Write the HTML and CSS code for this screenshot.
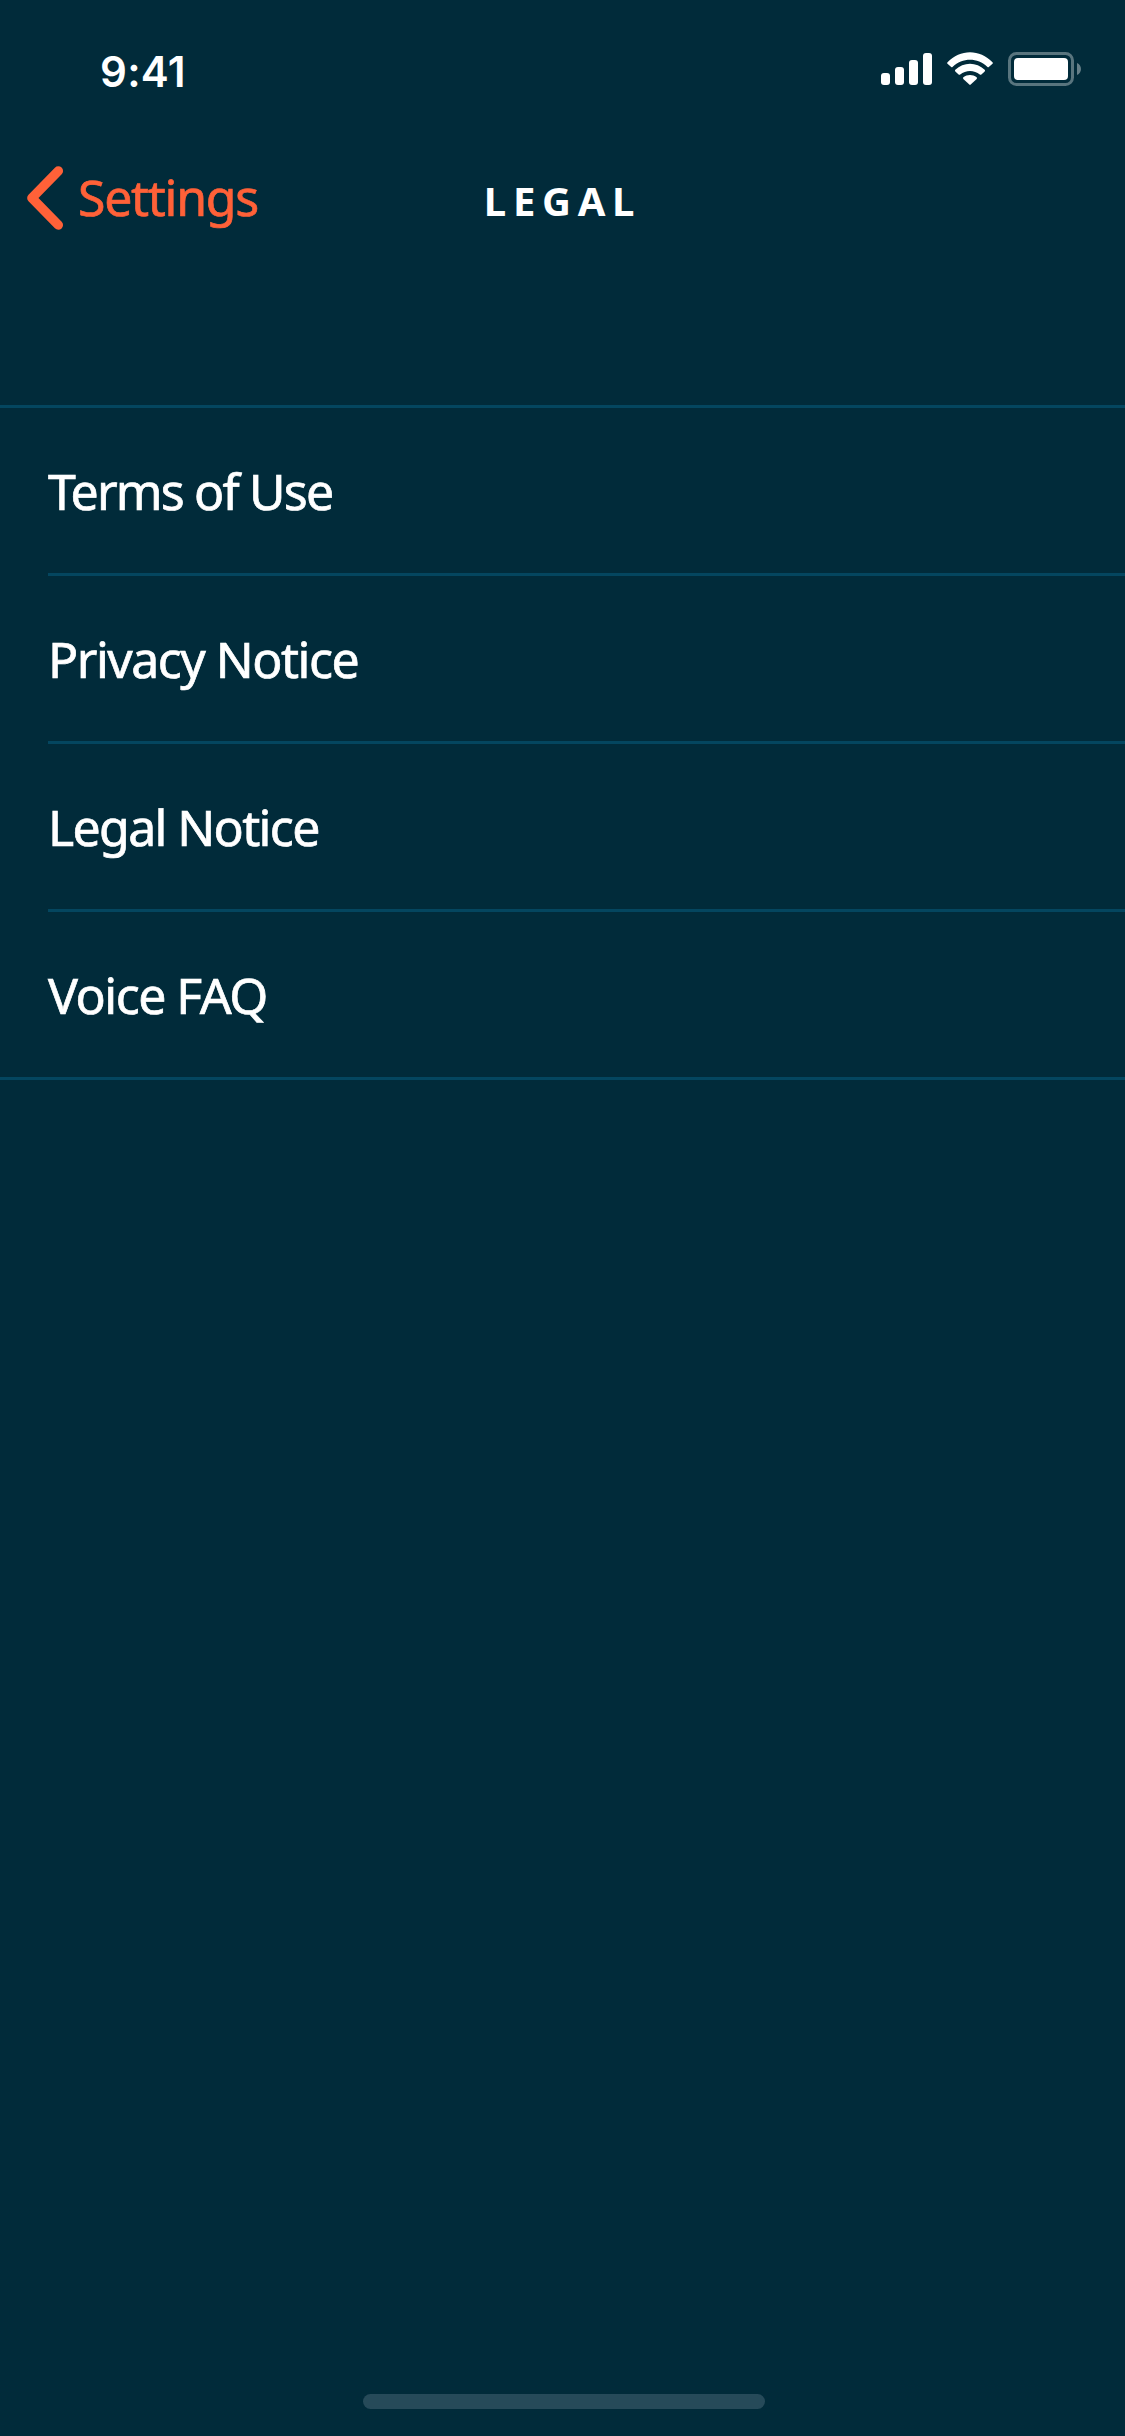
FILE: index.html
```html
<!DOCTYPE html>
<html lang="en">
<head>
<meta charset="utf-8">
<title>Legal</title>
<link rel="stylesheet" href="styles.css">
</head>
<body>
<div class="screen">
  <div class="status-bar">
    <span class="time">9:41</span>
    <svg class="status-icons" width="202" height="36" viewBox="880 51 202 36" fill="#fff">
      <rect x="881" y="73" width="9" height="12" rx="3"/>
      <rect x="895" y="67" width="9" height="18" rx="3"/>
      <rect x="909" y="60" width="9" height="25" rx="3"/>
      <rect x="923" y="53" width="9" height="32" rx="3"/>
      <path d="M947.5 62.2C960 48.8 980 48.800 992.500 62.200Q993.200 63 992.500 63.800L988.800 67Q988.200 67.500 987.500 66.900C977.500 57.300 962.500 57.300 952.500 66.900Q951.800 67.500 951.200 67L947.500 63.800Q946.800 63 947.500 62.200Z"/>
      <path d="M955.300 69.800C963.500 61.800 976.500 61.800 984.700 69.800Q985.400 70.600 984.700 71.400L981.400 74.500Q980.600 75.200 979.800 74.500C974.300 69.800 965.700 69.800 960.200 74.500Q959.400 75.200 958.600 74.500L955.300 71.400Q954.600 70.600 955.300 69.800Z"/>
      <path d="M963.400 77.300C967.200 74.100 972.800 74.100 976.600 77.300Q977.400 78.100 976.700 78.900L970.700 84.600Q970 85.200 969.300 84.600L963.300 78.900Q962.600 78.100 963.400 77.300Z"/>
      <rect x="1009.500" y="53.500" width="63" height="31" rx="7" fill="none" stroke="#fff" stroke-opacity=".35" stroke-width="3"/>
      <rect x="1014" y="58" width="54" height="22" rx="4"/>
      <path d="M1077 63C1082.300 65.300 1082.300 72.700 1077 75Z" fill-opacity=".4"/>
    </svg>
  </div>
  <div class="nav-bar">
    <a class="back">
      <svg class="chevron" width="37" height="64" viewBox="27 166 37 64" fill="none" stroke="#ff6138" stroke-width="9.500" stroke-linecap="round" stroke-linejoin="round">
        <path d="M58.300 171L31.900 198L58.300 225"/>
      </svg>
      <span class="back-label">Settings</span>
    </a>
    <h1 class="title">LEGAL</h1>
  </div>
  <ul class="list">
    <li class="row"><span class="label terms">Terms of Use</span></li>
    <li class="row"><span class="label">Privacy Notice</span></li>
    <li class="row"><span class="label notice">Legal Notice</span></li>
    <li class="row"><span class="label">Voice FAQ</span></li>
  </ul>
  <div class="home-indicator"></div>
</div>
</body>
</html>
```
FILE: styles.css
```css
* { box-sizing: border-box; }
body {
  margin: 0;
  background: #012b3a;
  color: #fff;
  font-family: "Noto Sans", "Open Sans", sans-serif;
}
.screen {
  width: 1125px;
  height: 2436px;
  display: flex;
  flex-direction: column;
}
.status-bar {
  height: 132px;
  padding: 51px 43px 0 100px;
  display: flex;
  justify-content: space-between;
  align-items: flex-start;
}
.time {
  font: 600 42px/41px "Inter", sans-serif;
  letter-spacing: 0.3px;
}
.status-icons { display: block; }
.nav-bar {
  height: 273px;
  padding: 34px 27px 0;
  display: grid;
  grid-template-columns: 1fr auto 1fr;
  align-items: start;
}
.back {
  display: flex;
  gap: 14px;
  color: #ff6138;
}
.back-label {
  font-size: 50px;
  line-height: 63px;
  letter-spacing: -1.3px;
  -webkit-text-stroke: 0.7px currentColor;
}
.title {
  margin: 0;
  font-size: 40px;
  line-height: 70px;
  font-weight: 700;
  letter-spacing: 6.7px;
}
.list {
  margin: 0;
  padding: 0;
  list-style: none;
  border-top: 3px solid #04465f;
  border-bottom: 3px solid #04465f;
}
.row {
  height: 168px;
  margin-left: 48px;
  border-bottom: 3px solid #04465f;
  display: flex;
  align-items: center;
}
.row:last-child {
  height: 165px;
  border-bottom: 0;
}
.label {
  font-size: 50px;
  line-height: 68px;
  letter-spacing: -1.5px;
  -webkit-text-stroke: 0.7px currentColor;
}
.terms { letter-spacing: -1.8px; }
.notice { letter-spacing: -1.65px; }
.home-indicator {
  width: 402px;
  height: 15px;
  margin: auto auto 27px 363px;
  border-radius: 8px;
  background: #264a59;
}
```
